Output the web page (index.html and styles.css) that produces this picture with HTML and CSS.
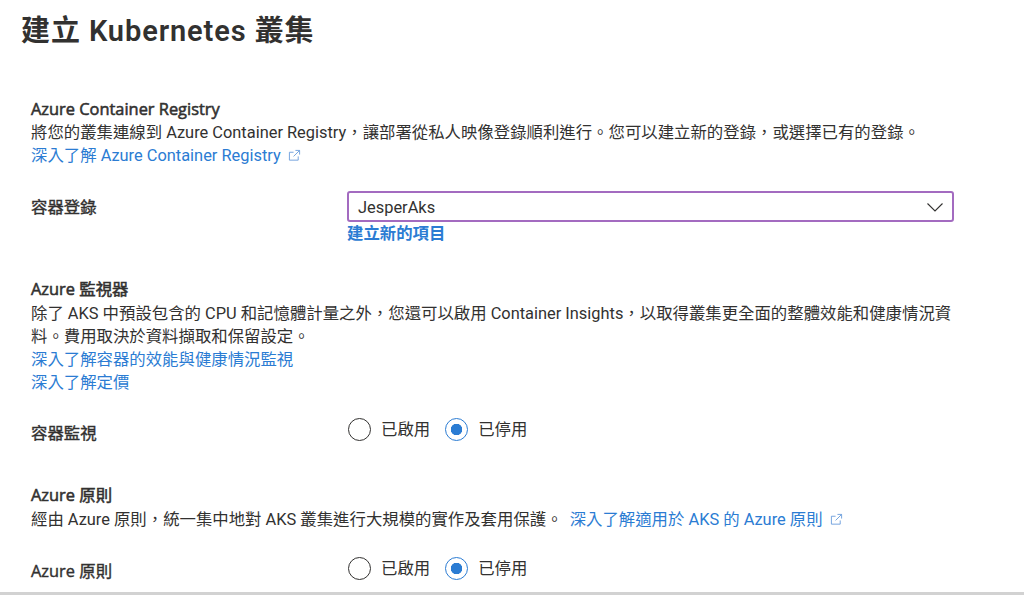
FILE: index.html
```html
<!DOCTYPE html>
<html lang="zh-Hant">
<head>
    <meta charset="UTF-8">
    <meta name="viewport" content="width=device-width, initial-scale=1.0">
    <title>建立 Kubernetes 叢集</title>
    <link rel="stylesheet" href="styles.css">
</head>
<body>
    <div class="page">
        <h1 class="title">建立 Kubernetes 叢集</h1>

        <div class="content">
            <div class="section section-acr">
                <h3>Azure Container Registry</h3>
                <p>將您的叢集連線到 Azure Container Registry，讓部署從私人映像登錄順利進行。您可以建立新的登錄，或選擇已有的登錄。</p>
                <a class="link" href="#">深入了解 Azure Container Registry
                    <svg class="ext" viewBox="0 0 14 14"><path d="M11 8v4H1.5V3.5H6M8 1.5h4.5V6M12.5 1.5 6 8" /></svg>
                </a>
            </div>

            <div class="row row-select">
                <div class="row-label">容器登錄</div>
                <div class="row-field">
                    <div class="select">
                        <span>JesperAks</span>
                        <svg class="chevron" viewBox="0 0 16 9"><path d="M.5.5 8 8 15.5.5" /></svg>
                    </div>
                    <a class="new-link" href="#">建立新的項目</a>
                </div>
            </div>

            <div class="section section-monitor">
                <h3>Azure 監視器</h3>
                <p>除了 AKS 中預設包含的 CPU 和記憶體計量之外，您還可以啟用 Container Insights，以取得叢集更全面的整體效能和健康情況資料。費用取決於資料擷取和保留設定。</p>
                <a class="link" href="#">深入了解容器的效能與健康情況監視</a>
                <a class="link" href="#">深入了解定價</a>
            </div>

            <div class="row row-radio">
                <div class="row-label">容器監視</div>
                <div class="radios">
                    <div class="radio"><span class="dot"></span>已啟用</div>
                    <div class="radio on"><span class="dot"></span>已停用</div>
                </div>
            </div>

            <div class="section section-policy">
                <h3>Azure 原則</h3>
                <p>經由 Azure 原則，統一集中地對 AKS 叢集進行大規模的實作及套用保護。 <a class="link inline" href="#">深入了解適用於 AKS 的 Azure 原則
                    <svg class="ext" viewBox="0 0 14 14"><path d="M11 8v4H1.5V3.5H6M8 1.5h4.5V6M12.5 1.5 6 8" /></svg>
                </a></p>
            </div>

            <div class="row row-radio">
                <div class="row-label">Azure 原則</div>
                <div class="radios">
                    <div class="radio"><span class="dot"></span>已啟用</div>
                    <div class="radio on"><span class="dot"></span>已停用</div>
                </div>
            </div>
        </div>
    </div>
</body>
</html>
```

FILE: styles.css
```css
html, body {
    margin: 0;
    height: 100%;
    overflow: hidden;
}
body {
    font-family: Roboto, "Noto Sans CJK TC", sans-serif;
    font-size: 16.4px;
    line-height: 23px;
    color: #323130;
    background: #fff;
}
.page {
    height: 592px;
    border-bottom: 3px solid #d2d2d2;
    overflow: hidden;
}
.title {
    margin: 0;
    padding: 12px 0 0 21px;
    font-size: 29px;
    line-height: 38px;
    font-weight: 600;
    letter-spacing: 0.9px;
}
.content {
    padding: 48px 70px 0 31px;
}
.section h3 {
    margin: -1px 0 1px;
    font-family: "Open Sans", "Noto Sans CJK TC", sans-serif;
    font-size: 16.4px;
    line-height: 23px;
    font-weight: 400;
    -webkit-text-stroke: 0.55px #323130;
}
.section p {
    margin: 0;
}
.section-monitor h3, .section-policy h3 {
    margin-bottom: 2px;
}
.link {
    display: block;
    color: #2b7cd3;
    text-decoration: none;
}
.link.inline {
    display: inline;
    margin-left: 3px;
}
.ext {
    width: 13px;
    height: 13px;
    margin-left: 3px;
    vertical-align: -1px;
    fill: none;
    stroke: #6d9fdc;
    stroke-width: 1;
}
.row {
    display: flex;
}
.row-label {
    width: 316px;
    font-family: "Open Sans", "Noto Sans CJK TC", sans-serif;
    -webkit-text-stroke: 0.4px #323130;
    flex-shrink: 0;
}
.row-select {
    margin-top: 24px;
}
.row-select .row-label {
    padding-top: 4px;
}
.row-field {
    width: 607px;
}
.select {
    display: flex;
    justify-content: space-between;
    align-items: center;
    height: 31px;
    box-sizing: border-box;
    padding: 2px 9px 0 9px;
    border: 2px solid #a36bc0;
    border-radius: 3px;
}
.chevron {
    width: 16px;
    height: 9px;
    fill: none;
    stroke: #323130;
    stroke-width: 1.1;
}
.new-link {
    display: block;
    color: #2b7cd3;
    font-weight: 600;
    text-decoration: none;
}
.section-monitor {
    margin-top: 33px;
}
.section-policy {
    margin-top: 26px;
}
.row-radio {
    height: 38px;
}
.row-radio .row-label {
    padding-top: 1px;
}
.section-monitor + .row-radio {
    margin-top: 26px;
}
.section-policy + .row-radio {
    margin-top: 28px;
}
.section-policy + .row-radio .row-label {
    padding-top: 0;
}
.radios {
    display: flex;
    gap: 14px;
}
.radio {
    display: flex;
    align-items: center;
    gap: 10px;
    height: 23px;
    margin-top: -2px;
}
.dot {
    width: 23px;
    height: 23px;
    box-sizing: border-box;
    border: 1.5px solid #323130;
    border-radius: 50%;
    margin-left: 1px;
}
.radio.on .dot {
    border-color: #2b7cd3;
    background: radial-gradient(circle, #2b7cd3 0 5.5px, #fff 6px);
}
```
